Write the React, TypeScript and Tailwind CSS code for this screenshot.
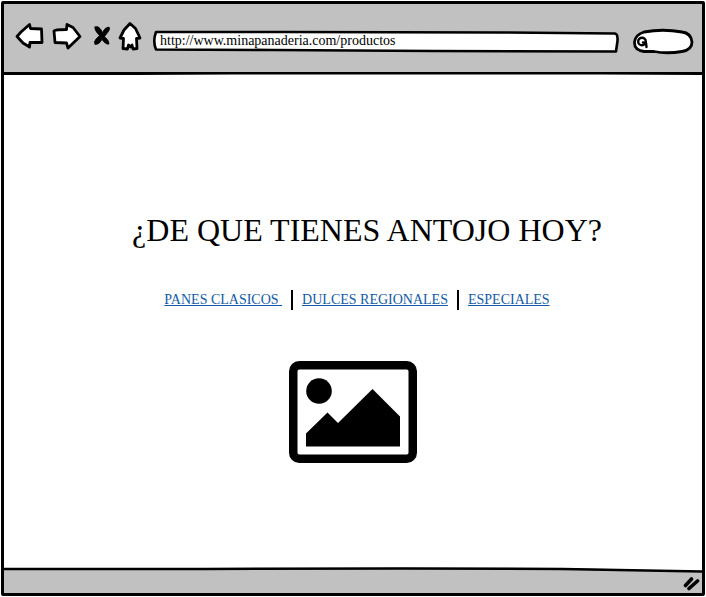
import type { ReactNode } from "react";

const links = [
  { label: "PANES CLASICOS\u00a0", href: "#clasicos" },
  { label: "DULCES REGIONALES", href: "#regionales" },
  { label: "ESPECIALES", href: "#especiales" },
];

function ToolButton({ label, children }: { label: string; children: ReactNode }) {
  return (
    <button type="button" aria-label={label} className="shrink-0">
      {children}
    </button>
  );
}

const ink = {
  stroke: "#000",
  strokeLinejoin: "round" as const,
  strokeLinecap: "round" as const,
};

function Toolbar() {
  return (
    <header className="flex h-[68px] shrink-0 items-center bg-[#c1c1c1] pb-1 pl-[11px] pr-2">
      <div className="flex items-center">
        <ToolButton label="Atrás">
          <svg width="29" height="28" viewBox="0 0 29 28" fill="#fff" strokeWidth="2.8" {...ink}>
            <path d="M2 14.500 L6 10 L14.500 2.500 L15.500 6.500 L26.500 7 L27 20.500 L15 20.500 L14.500 25 L8 21Z" />
          </svg>
        </ToolButton>
        <ToolButton label="Adelante">
          <svg className="ml-2" width="30" height="28" viewBox="0 0 30 28" fill="#fff" strokeWidth="2.8" {...ink}>
            <path d="M2 9 Q3 7.500 14.500 7.500 L15 2.500 L21 5.500 L28 14.500 L16 26 L14.500 21 L3 20.500Z" />
          </svg>
        </ToolButton>
        <ToolButton label="Detener">
          <svg className="ml-2.5" width="20" height="28" viewBox="0 0 20 28" strokeWidth="0.8" {...ink}>
            <path d="M3 5 Q6 3.500 8.500 7 L10.500 10.500 Q13 5 17 5 Q18.500 7 16 10 L12.500 14.500 Q17.500 19 17 22 Q14 23 10 17.500 Q7 23 3 22.500 Q1.500 20 4 17 L7.500 13.500 Q2 8 3 5Z" />
          </svg>
        </ToolButton>
        <ToolButton label="Inicio">
          <svg className="ml-1.5" width="24" height="30" viewBox="0 0 24 30" fill="#fff" strokeWidth="2.8" {...ink}>
            <path d="M12 2.500 L17.500 7.500 L22 17 L18.500 17.500 L19 27.500 L15 28 L14 24 L12.500 26 L10.500 24 L9.500 28 L5 27.500 L5.500 17.500 L2 17 L6 9Z" />
          </svg>
        </ToolButton>
      </div>
      <div className="relative ml-2.5 mt-3 h-6 flex-1">
        <svg className="absolute inset-0 h-full w-full" viewBox="0 0 466 24" preserveAspectRatio="none" fill="#fff" strokeWidth="2.6" {...ink}>
          <path d="M4 2 L130 2 L350 2.500 L461 3.500 Q464 4 463.500 11 L462 21.500 L280 21 L120 20 L4 19.500 Q.5 11 4 2Z" />
        </svg>
        <input
          type="text"
          aria-label="Dirección"
          defaultValue="http://www.minapanaderia.com/productos"
          className="relative block h-5 w-full bg-transparent pl-2 pr-3 pt-px text-sm text-black outline-none"
        />
      </div>
      <div className="relative ml-3 mt-3 h-7 w-[62px] shrink-0">
        <svg className="absolute inset-0" width="62" height="28" viewBox="0 0 62 28" fill="#fff" strokeWidth="2.8" {...ink}>
          <path d="M12 4 Q31 .5 50 4 Q59 5 60 14 Q60 22 50 23.500 Q35 26 22 23.500 L12 23.500 Q2 22 2.500 14 Q3 7 12 4Z" />
          <circle cx="10" cy="13.500" r="3.800" strokeWidth="2.4" />
          <path d="M11 14.500 L14 15 L14.500 19" strokeWidth="2.4" fill="none" />
        </svg>
        <input
          type="search"
          aria-label="Buscar"
          className="relative block h-full w-full bg-transparent pl-4 pr-2 text-sm outline-none"
        />
      </div>
    </header>
  );
}

function PictureIcon() {
  return (
    <svg width="128" height="102" viewBox="0 0 128 102" role="img" aria-label="Imagen de productos">
      <rect x="4.250" y="4.250" width="119.500" height="93.500" rx="6" fill="none" stroke="#000" strokeWidth="8.500" />
      <circle cx="30" cy="30" r="12.800" />
      <path d="M17 72.500 L38.500 51.500 L49 62 L83.500 28 L111 55.500 L111 85.500 L17 85.500Z" />
    </svg>
  );
}

export default function App() {
  return (
    <div className="h-screen bg-white px-px pb-px pt-px font-['Liberation_Serif',serif] text-black">
      <div className="flex h-full flex-col overflow-hidden rounded-xs border-[3px] border-black">
        <Toolbar />
        <svg className="block h-[3px] w-full shrink-0 bg-[#c1c1c1]" viewBox="0 0 700 3" preserveAspectRatio="none">
          <path d="M0 3H700V2H0Z" fill="#fff" />
          <path d="M0 0 L700 0 L700 3 L600 2.500 L230 2.500 L130 3 L0 3Z" />
        </svg>
        <main className="flex flex-1 flex-col items-center pl-1 pt-[135px]">
          <h1 className="ml-6 text-[32px] leading-10">¿DE QUE TIENES ANTOJO HOY?</h1>
          <nav aria-label="Productos" className="ml-1 mt-10 flex h-5 items-center text-sm">
            {links.map((link, index) => (
              <div key={link.href} className="flex items-center">
                {index > 0 && <span aria-hidden="true" className="mx-[9px] h-5 w-[2px] bg-black" />}
                <a href={link.href} className="text-[#125aa5] underline">
                  {link.label}
                </a>
              </div>
            ))}
          </nav>
          <div className="mr-1 mt-[51px]">
            <PictureIcon />
          </div>
        </main>
        <footer className="relative flex h-[26px] shrink-0 items-end justify-end">
          <svg className="absolute inset-0 h-full w-full" viewBox="0 0 700 26" preserveAspectRatio="none">
            <path d="M0 1.500 L200 1.500 L400 .5 L560 1 L700 4 V26 H0Z" fill="#c1c1c1" />
            <path d="M0 2 L200 2 L400 1.500 L560 2 L700 4.500" fill="none" stroke="#000" strokeWidth="2.500" />
          </svg>
          <svg className="relative mb-0.5 mr-0.5" width="17" height="15" viewBox="0 0 17 15" fill="none" strokeWidth="3.600" {...ink}>
            <path d="M2.500 9.500 L8.500 3" />
            <path d="M6 12.500 L14.500 5" />
          </svg>
        </footer>
      </div>
    </div>
  );
}
